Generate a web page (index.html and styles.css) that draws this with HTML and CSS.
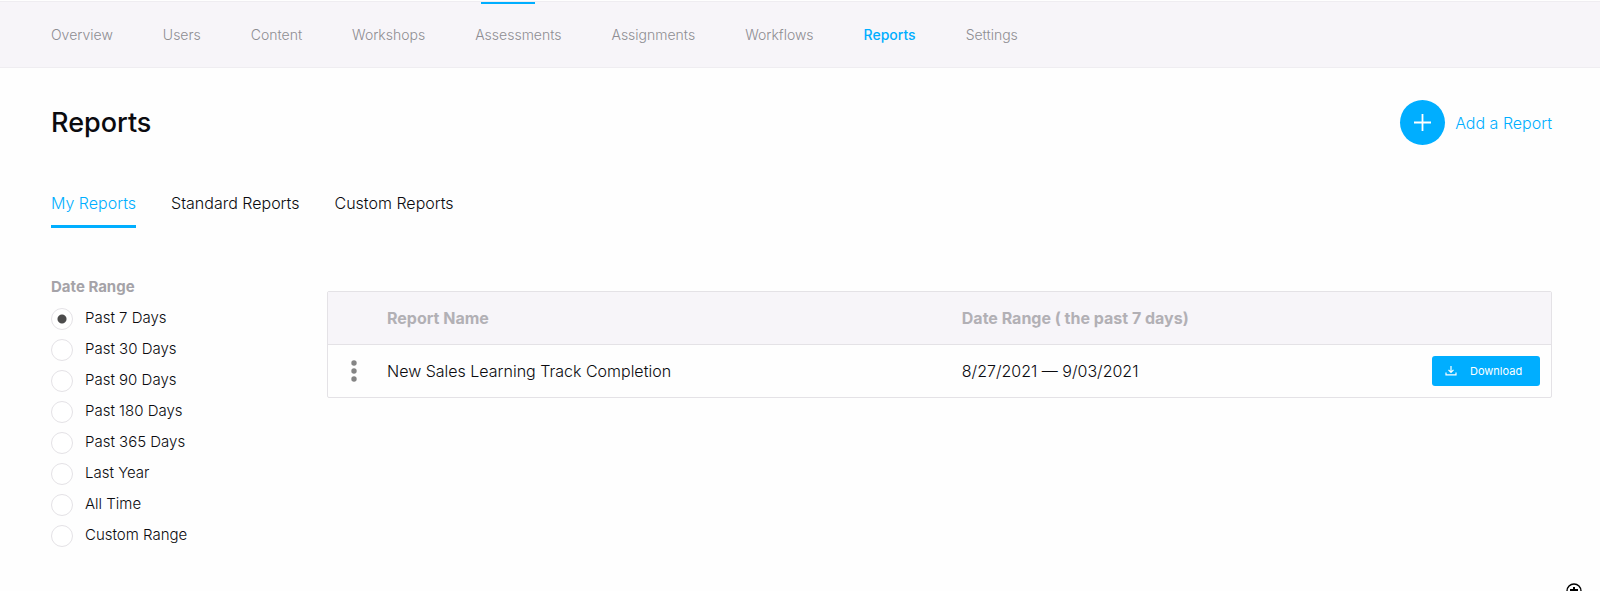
FILE: index.html
```html
<!DOCTYPE html>
<html lang="en">
<head>
    <meta charset="UTF-8">
    <meta name="viewport" content="width=device-width, initial-scale=1.0">
    <title>Reports</title>
    <link rel="stylesheet" href="styles.css">
</head>
<body>
    <nav class="main-nav">
        <a href="#">Overview</a>
        <a href="#">Users</a>
        <a href="#">Content</a>
        <a href="#">Workshops</a>
        <a href="#" class="marked">Assessments</a>
        <a href="#">Assignments</a>
        <a href="#">Workflows</a>
        <a href="#" class="active">Reports</a>
        <a href="#">Settings</a>
    </nav>
    <main class="page">
        <header class="page-header">
            <h1>Reports</h1>
            <button type="button" class="add-report">
                <span class="add-icon">
                    <svg width="17" height="17" viewBox="0 0 17 17" fill="none" stroke="#fff" stroke-width="1.8">
                        <path d="M8.5 0v17M0 8.5h17"/>
                    </svg>
                </span>
                Add a Report
            </button>
        </header>
        <nav class="tabs">
            <a href="#" class="active">My Reports</a>
            <a href="#">Standard Reports</a>
            <a href="#">Custom Reports</a>
        </nav>
        <div class="content">
            <fieldset class="date-range">
                <legend>Date Range</legend>
                <label><input type="radio" name="range" checked>Past 7 Days</label>
                <label><input type="radio" name="range">Past 30 Days</label>
                <label><input type="radio" name="range">Past 90 Days</label>
                <label><input type="radio" name="range">Past 180 Days</label>
                <label><input type="radio" name="range">Past 365 Days</label>
                <label><input type="radio" name="range">Last Year</label>
                <label><input type="radio" name="range">All Time</label>
                <label><input type="radio" name="range">Custom Range</label>
            </fieldset>
            <div class="report-list">
                <table>
                    <thead>
                        <tr>
                            <th class="col-menu"></th>
                            <th class="col-name">Report Name</th>
                            <th>Date Range ( the past 7 days)</th>
                            <th class="col-action"></th>
                        </tr>
                    </thead>
                    <tbody>
                        <tr>
                            <td class="col-menu">
                                <button type="button" class="menu-btn" aria-label="More">
                                    <svg width="6" height="22" viewBox="0 0 6 22" fill="#858585">
                                        <circle cx="3" cy="3" r="2.7"/>
                                        <circle cx="3" cy="11" r="2.7"/>
                                        <circle cx="3" cy="19" r="2.7"/>
                                    </svg>
                                </button>
                            </td>
                            <td>New Sales Learning Track Completion</td>
                            <td>8/27/2021 — 9/03/2021</td>
                            <td class="col-action">
                                <button type="button" class="download-btn">
                                    <svg width="12" height="12" viewBox="0 0 12 12" fill="none" stroke="#fff" stroke-width="1.2">
                                        <path d="M6 1v6M3.5 4.8L6 7.3l2.5-2.5M1 7.5v2.3h10V7.5"/>
                                    </svg>
                                    Download
                                </button>
                            </td>
                        </tr>
                    </tbody>
                </table>
            </div>
        </div>
    </main>
    <svg class="corner-mark" width="16" height="8" viewBox="0 0 16 8">
        <circle cx="8" cy="8" r="7" fill="#fff" stroke="#000" stroke-width="1.4"/>
        <path d="M7 4h2v2h3v2H4V6h3z" fill="#000"/>
    </svg>
</body>
</html>
```
FILE: styles.css
```css
* {
    margin: 0;
    padding: 0;
    box-sizing: border-box;
}
body {
    font-family: Inter, Arial, sans-serif;
    font-size: 16px;
    font-weight: 300;
    line-height: 20px;
    color: #0b0b0f;
    background-color: #fefefe;
}
a {
    color: inherit;
    text-decoration: none;
}
button {
    font: inherit;
    color: inherit;
    background: none;
    border: none;
    cursor: pointer;
}

/* Top navigation */
.main-nav {
    display: flex;
    gap: 50px;
    height: 67px;
    margin-top: 1px;
    padding: 0 51px;
    border-top: 1px solid #efedf1;
    border-bottom: 1px solid #efedf1;
    background-color: #f7f5f9;
    font-size: 14px;
    line-height: 65px;
    color: #8e8d92;
}
.main-nav a {
    position: relative;
}
.main-nav .active {
    color: #00aeff;
    font-weight: 500;
}
.main-nav .marked::before {
    content: "";
    position: absolute;
    top: 0;
    left: 6px;
    width: 54px;
    height: 2px;
    background-color: #00aeff;
}

.page {
    padding: 32px 48px 32px 51px;
}
.page-header {
    display: flex;
    justify-content: space-between;
    align-items: center;
}
.page-header h1 {
    font-size: 27px;
    font-weight: 500;
}
.add-report {
    display: flex;
    align-items: center;
    gap: 10px;
    color: #00aeff;
}
.add-icon {
    display: flex;
    align-items: center;
    justify-content: center;
    width: 45px;
    height: 45px;
    border-radius: 50%;
    background-color: #00aeff;
}

/* Report tabs */
.tabs {
    display: flex;
    gap: 35px;
    margin-top: 48px;
}
.tabs a {
    padding-bottom: 12px;
    border-bottom: 3px solid transparent;
}
.tabs .active {
    color: #00aeff;
    border-color: #00aeff;
}

.content {
    display: flex;
    align-items: flex-start;
    margin-top: 49px;
}
.date-range {
    width: 276px;
    border: none;
    font-size: 15px;
}
.date-range legend {
    margin-bottom: 11px;
    font-weight: 700;
    color: #a5a3a8;
}
.date-range label {
    display: flex;
    gap: 12px;
    height: 31px;
}
.date-range input {
    appearance: none;
    width: 22px;
    height: 22px;
    border: 1px solid #e4e2e6;
    border-radius: 50%;
    background-color: #fff;
}
.date-range input:checked {
    background-image: radial-gradient(circle, #4c4c4c 4px, transparent 5px);
}

/* Table of reports */
.report-list {
    flex: 1;
    margin-top: 14px;
    border: 1px solid #e4e2e6;
    border-radius: 2px;
}
table {
    width: 100%;
    border-collapse: collapse;
    table-layout: fixed;
}
th,
td {
    height: 52px;
    text-align: left;
}
td {
    height: 53px;
}
th {
    font-weight: 700;
    color: #b2b0b5;
    background-color: #f7f5f9;
    border-bottom: 1px solid #e4e2e6;
}
.col-menu {
    width: 59px;
    padding-left: 23px;
}
.col-name {
    width: 47%;
}
.col-action {
    width: 140px;
    padding-right: 11px;
}
.menu-btn,
.menu-btn svg {
    display: block;
}
.download-btn {
    display: flex;
    align-items: center;
    gap: 13px;
    width: 108px;
    height: 30px;
    margin-left: auto;
    padding-left: 13px;
    border-radius: 3px;
    background-color: #00aeff;
    color: #fff;
    font-size: 11px;
    font-weight: 400;
}

.corner-mark {
    position: fixed;
    right: 18px;
    bottom: 0;
}
```
